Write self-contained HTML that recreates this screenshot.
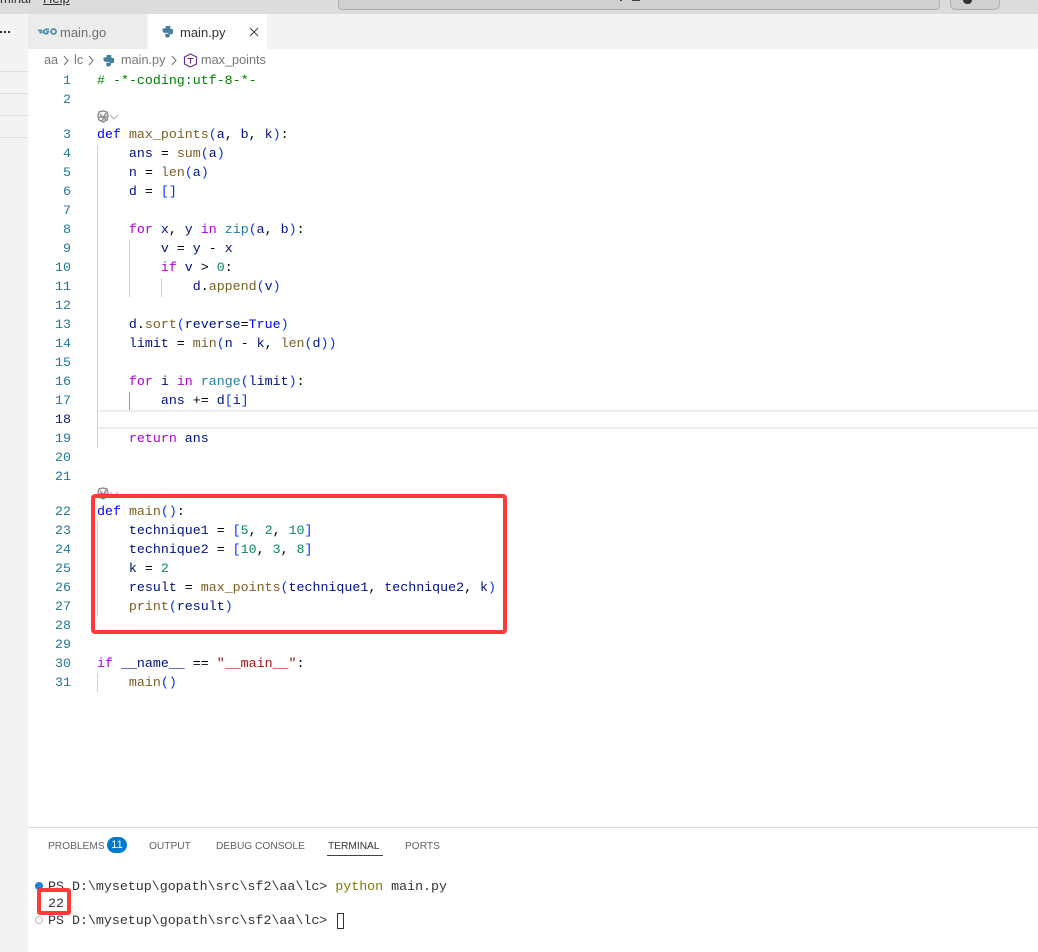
<!DOCTYPE html>
<html><head><meta charset="utf-8">
<style>
html,body{margin:0;padding:0;background:#fff}
#r{position:relative;width:1038px;height:952px;overflow:hidden;background:#fff;font-family:"Liberation Sans",sans-serif}
.a{position:absolute}
.l{position:absolute;left:97px;white-space:pre;font:13.3px/19px "Liberation Mono","DejaVu Sans Mono",monospace;color:#001080;height:19px}
.n{position:absolute;left:40px;width:31px;text-align:right;font:13.3px/19px "Liberation Mono","DejaVu Sans Mono",monospace;color:#237893;height:19px}
.g{position:absolute;width:1px;background:#d3d3d3}
.k{color:#0000ff}.c{color:#af00db}.f{color:#795e26}.b{color:#0431fa}.d{color:#098658}.o{color:#000}.s{color:#a31515}.t{color:#267f99}.m{color:#008000}
.tm{position:absolute;left:48px;white-space:pre;font:13.3px/17px "Liberation Mono","DejaVu Sans Mono",monospace;color:#333}
.pt{position:absolute;top:840px;font-size:10.2px;line-height:14px;color:#616161;white-space:nowrap}
.bc{position:absolute;top:53px;font-size:12.7px;line-height:15px;color:#777;white-space:nowrap}
</style></head><body><div id="r">
<div class="a" style="left:0;top:0;width:1038px;height:14px;background:#dcdcdc"></div>
<div class="a" style="left:0;top:-8px;font-size:13px;line-height:14px;color:#333;white-space:nowrap">minal</div>
<div class="a" style="left:43px;top:-8px;font-size:13px;line-height:14px;color:#333;white-space:nowrap;text-decoration:underline">Help</div>
<div class="a" style="left:338px;top:-10px;width:600px;height:18px;background:#d0d0d0;border:1px solid #b0b0b0;border-radius:4px"></div>
<div class="a" style="left:950px;top:-10px;width:48px;height:18px;background:#d0d0d0;border:1px solid #b0b0b0;border-radius:6px"></div>
<div class="a" style="left:963px;top:0;width:9px;height:4px;background:#333;border-radius:0 0 5px 5px"></div>
<div class="a" style="left:620px;top:0;width:2px;height:1px;background:#444"></div>
<div class="a" style="left:632px;top:0;width:8px;height:1px;background:#444"></div>
<div class="a" style="left:0;top:14px;width:28px;height:938px;background:#f3f3f3"></div>
<div class="a" style="left:0;top:71px;width:28px;height:1px;background:#dcdcdc"></div>
<div class="a" style="left:0;top:93px;width:28px;height:1px;background:#dcdcdc"></div>
<div class="a" style="left:0;top:115px;width:28px;height:1px;background:#dcdcdc"></div>
<div class="a" style="left:0;top:137px;width:28px;height:1px;background:#dcdcdc"></div>
<div class="a" style="left:0;top:31px;width:2px;height:2px;background:#333"></div>
<div class="a" style="left:4px;top:31px;width:2px;height:2px;background:#333"></div>
<div class="a" style="left:8px;top:31px;width:2px;height:2px;background:#333"></div>
<div class="a" style="left:28px;top:14px;width:1010px;height:35px;background:#f3f3f3"></div>
<div class="a" style="left:28px;top:14px;width:119px;height:35px;background:#ececec"></div>
<div class="a" style="left:148px;top:14px;width:119px;height:35px;background:#fff"></div>
<svg class="a" style="left:38px;top:26px" width="20" height="11" viewBox="0 0 20 11"><g fill="none" stroke="#4a8ba8" stroke-width="1.700"><path d="M0 4.500h4.500M1.500 6.500h3"/><path d="M11 3.400H8.800C7 3.400 5.800 4.400 5.800 5.700C5.800 7 6.800 7.700 8.200 7.700H9.200L10.200 5.700H8.400"/><circle cx="15.600" cy="5.500" r="2.500"/></g></svg>
<div class="a" style="left:60px;top:25px;font-size:13px;line-height:16px;color:#6f6f6f">main.go</div>
<svg class="a" style="left:162px;top:25px" width="12" height="13" viewBox="0 0 13 14"><path fill="#457f9c" d="M4 1h5v3l3 .5V9l-2 1H8.500v2l-1.500 1.500H4.500L3.500 12V9.500H7V8.500H2L.5 6.500V4L3 3.500H4z"/></svg>
<div class="a" style="left:180px;top:25px;font-size:13px;line-height:16px;color:#333">main.py</div>
<svg class="a" style="left:248px;top:26px" width="12" height="12" viewBox="0 0 12 12"><path d="M2 2l8 8M10 2l-8 8" stroke="#424242" stroke-width="1" fill="none"/></svg>
<div class="bc" style="left:44px">aa</div>
<svg class="a" style="left:62px;top:55px" width="8" height="11" viewBox="0 0 8 11"><path d="M2 1l4 4.500-4 4.500" fill="none" stroke="#777" stroke-width="1.100"/></svg>
<div class="bc" style="left:74px">lc</div>
<svg class="a" style="left:87px;top:55px" width="8" height="11" viewBox="0 0 8 11"><path d="M2 1l4 4.500-4 4.500" fill="none" stroke="#777" stroke-width="1.100"/></svg>
<svg class="a" style="left:103px;top:54px" width="12" height="13" viewBox="0 0 13 14"><path fill="#457f9c" d="M4 1h5v3l3 .5V9l-2 1H8.500v2l-1.500 1.500H4.500L3.500 12V9.500H7V8.500H2L.5 6.500V4L3 3.500H4z"/></svg>
<div class="bc" style="left:121px">main.py</div>
<svg class="a" style="left:170px;top:55px" width="8" height="11" viewBox="0 0 8 11"><path d="M2 1l4 4.500-4 4.500" fill="none" stroke="#777" stroke-width="1.100"/></svg>
<svg class="a" style="left:183px;top:53px" width="15" height="15" viewBox="0 0 15 15"><path d="M7.500 1l6 3v7l-6 3-6-3V4z" fill="none" stroke="#652d90" stroke-width="1.100"/><path d="M4.500 5.500h6M7.500 5.500v5" fill="none" stroke="#652d90" stroke-width="1.100"/></svg>
<div class="bc" style="left:201px">max_points</div>

<div class="g" style="left:97px;top:145px;height:303px"></div>
<div class="g" style="left:129px;top:240px;height:57px"></div>
<div class="g" style="left:161px;top:278px;height:19px"></div>
<div class="g" style="left:129px;top:392px;height:19px;background:#999"></div>
<div class="g" style="left:97px;top:521px;height:95px"></div>
<div class="g" style="left:97px;top:673px;height:19px"></div>
<div class="a" style="left:98px;top:410px;width:940px;height:15px;border:solid #eee;border-width:2px 0;background:#fff"></div>

<svg class="a" style="left:97px;top:110px" width="24" height="14" viewBox="0 0 24 14"><path d="M6 1l4 1 1 4-1 4-4 2-4-2-1-4 1-4zM3 4l6 6M9 3l-4 8M2 7h8" fill="none" stroke="#8a8a8a" stroke-width="1.400"/><path d="M13 5l4 4 4-4" fill="none" stroke="#999" stroke-width=".8"/></svg>
<svg class="a" style="left:97px;top:487px" width="24" height="14" viewBox="0 0 24 14"><path d="M6 1l4 1 1 4-1 4-4 2-4-2-1-4 1-4zM3 4l6 6M9 3l-4 8M2 7h8" fill="none" stroke="#8a8a8a" stroke-width="1.400"/><path d="M13 5l4 4 4-4" fill="none" stroke="#999" stroke-width=".8"/></svg>

<div class="n" style="top:71px">1</div><div class="l" style="top:71px"><span class="m"># -*-coding:utf-8-*-</span></div>
<div class="n" style="top:90px">2</div>
<div class="n" style="top:125px">3</div><div class="l" style="top:125px"><span class="k">def</span> <span class="f">max_points</span><span class="b">(</span>a<span class="o">,</span> b<span class="o">,</span> k<span class="b">)</span><span class="o">:</span></div>
<div class="n" style="top:144px">4</div><div class="l" style="top:144px">    ans <span class="o">=</span> <span class="f">sum</span><span class="b">(</span>a<span class="b">)</span></div>
<div class="n" style="top:163px">5</div><div class="l" style="top:163px">    n <span class="o">=</span> <span class="f">len</span><span class="b">(</span>a<span class="b">)</span></div>
<div class="n" style="top:182px">6</div><div class="l" style="top:182px">    d <span class="o">=</span> <span class="b">[]</span></div>
<div class="n" style="top:201px">7</div>
<div class="n" style="top:220px">8</div><div class="l" style="top:220px">    <span class="c">for</span> x<span class="o">,</span> y <span class="c">in</span> <span class="t">zip</span><span class="b">(</span>a<span class="o">,</span> b<span class="b">)</span><span class="o">:</span></div>
<div class="n" style="top:239px">9</div><div class="l" style="top:239px">        v <span class="o">=</span> y <span class="o">-</span> x</div>
<div class="n" style="top:258px">10</div><div class="l" style="top:258px">        <span class="c">if</span> v <span class="o">&gt;</span> <span class="d">0</span><span class="o">:</span></div>
<div class="n" style="top:277px">11</div><div class="l" style="top:277px">            d<span class="o">.</span><span class="f">append</span><span class="b">(</span>v<span class="b">)</span></div>
<div class="n" style="top:296px">12</div>
<div class="n" style="top:315px">13</div><div class="l" style="top:315px">    d<span class="o">.</span><span class="f">sort</span><span class="b">(</span>reverse<span class="o">=</span><span class="k">True</span><span class="b">)</span></div>
<div class="n" style="top:334px">14</div><div class="l" style="top:334px">    limit <span class="o">=</span> <span class="f">min</span><span class="b">(</span>n <span class="o">-</span> k<span class="o">,</span> <span class="f">len</span><span class="b">(</span>d<span class="b">))</span></div>
<div class="n" style="top:353px">15</div>
<div class="n" style="top:372px">16</div><div class="l" style="top:372px">    <span class="c">for</span> i <span class="c">in</span> <span class="t">range</span><span class="b">(</span>limit<span class="b">)</span><span class="o">:</span></div>
<div class="n" style="top:391px">17</div><div class="l" style="top:391px">        ans <span class="o">+=</span> d<span class="b">[</span>i<span class="b">]</span></div>
<div class="n" style="top:410px;color:#0b216f">18</div>
<div class="n" style="top:429px">19</div><div class="l" style="top:429px">    <span class="c">return</span> ans</div>
<div class="n" style="top:448px">20</div>
<div class="n" style="top:467px">21</div>
<div class="n" style="top:502px">22</div><div class="l" style="top:502px"><span class="k">def</span> <span class="f">main</span><span class="b">()</span><span class="o">:</span></div>
<div class="n" style="top:521px">23</div><div class="l" style="top:521px">    technique1 <span class="o">=</span> <span class="b">[</span><span class="d">5</span><span class="o">,</span> <span class="d">2</span><span class="o">,</span> <span class="d">10</span><span class="b">]</span></div>
<div class="n" style="top:540px">24</div><div class="l" style="top:540px">    technique2 <span class="o">=</span> <span class="b">[</span><span class="d">10</span><span class="o">,</span> <span class="d">3</span><span class="o">,</span> <span class="d">8</span><span class="b">]</span></div>
<div class="n" style="top:559px">25</div><div class="l" style="top:559px">    k <span class="o">=</span> <span class="d">2</span></div>
<div class="n" style="top:578px">26</div><div class="l" style="top:578px">    result <span class="o">=</span> <span class="f">max_points</span><span class="b">(</span>technique1<span class="o">,</span> technique2<span class="o">,</span> k<span class="b">)</span></div>
<div class="n" style="top:597px">27</div><div class="l" style="top:597px">    <span class="f">print</span><span class="b">(</span>result<span class="b">)</span></div>
<div class="n" style="top:616px">28</div>
<div class="n" style="top:635px">29</div>
<div class="n" style="top:654px">30</div><div class="l" style="top:654px"><span class="c">if</span> __name__ <span class="o">==</span> <span class="s">"__main__"</span><span class="o">:</span></div>
<div class="n" style="top:673px">31</div><div class="l" style="top:673px">    <span class="f">main</span><span class="b">()</span></div>

<div class="a" style="left:91px;top:494px;width:408px;height:132px;border:4px solid #ff3a3a;border-radius:4px"></div>

<div class="a" style="left:28px;top:827px;width:1010px;height:1px;background:#dcdcdc"></div>
<div class="pt" style="left:48px">PROBLEMS</div>
<div class="a" style="left:107px;top:837px;width:20px;height:16px;border-radius:8px;background:#007acc;color:#fff;font-size:11px;line-height:16px;text-align:center">11</div>
<div class="pt" style="left:149px">OUTPUT</div>
<div class="pt" style="left:216px">DEBUG CONSOLE</div>
<div class="pt" style="left:328px;color:#333">TERMINAL</div>
<div class="a" style="left:327px;top:855px;width:56px;height:1px;background:#424242"></div>
<div class="pt" style="left:405px">PORTS</div>

<div class="a" style="left:35px;top:882px;width:8px;height:8px;border-radius:50%;background:#1a85d0"></div>
<div class="a" style="left:35px;top:916px;width:6px;height:6px;border-radius:50%;border:1px solid #bbb"></div>
<div class="tm" style="top:878px">PS D:\mysetup\gopath\src\sf2\aa\lc&gt; <span style="color:#7d7a00">python</span> main.py</div>
<div class="tm" style="top:895px">22</div>
<div class="tm" style="top:912px">PS D:\mysetup\gopath\src\sf2\aa\lc&gt;</div>
<div class="a" style="left:337px;top:913px;width:5px;height:14px;border:1px solid #333"></div>
<div class="a" style="left:37px;top:888px;width:26px;height:19px;border:4px solid #ff3a3a;border-radius:3px"></div>
</div></body></html>
